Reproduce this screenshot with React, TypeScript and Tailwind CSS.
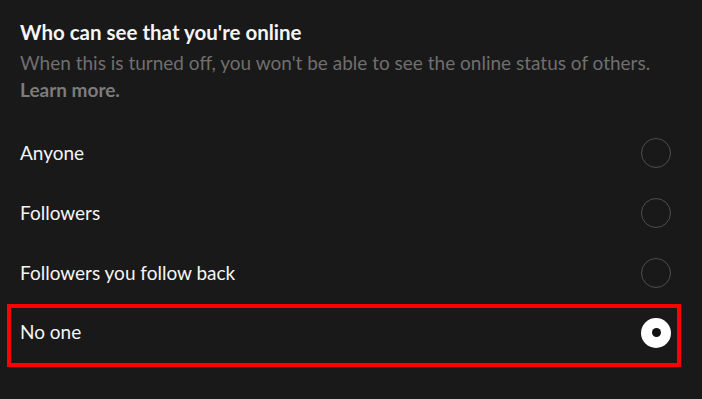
import React, { useState } from 'react';

const options = ['Anyone', 'Followers', 'Followers you follow back', 'No one'];

export default function App() {
  const [selected, setSelected] = useState('No one');

  return (
    <div
      className="w-[702px] h-[399px] bg-[#191919] text-[#f5f5f5] overflow-hidden pl-5 pr-[31px] pt-5"
      style={{ fontFamily: 'Lato, "Noto Sans", sans-serif' }}
    >
      <h2 className="text-[20.5px] leading-6 font-bold">Who can see that you're online</h2>
      <p className="mt-[5px] text-[19px] leading-[27px] text-[#6f6f6f]">
        When this is turned off, you won't be able to see the online status of others.
        <br />
        <span className="font-bold text-[#7c7c7c]">Learn more.</span>
      </p>
      <div className="mt-[20px] flex flex-col">
        {options.map(opt => {
          const isActive = selected === opt;
          return (
            <button
              key={opt}
              onClick={() => setSelected(opt)}
              className={`flex items-center justify-between text-left ${
                isActive
                  ? 'h-[63px] mt-[1px] -ml-[13px] -mr-[10px] pl-[9px] pr-[6px] pb-[6px] border-4 border-[#ff0000]'
                  : 'h-[60px]'
              }`}
            >
              <span className="text-[19px]">{opt}</span>
              {isActive ? (
                <span className="w-[30px] h-[30px] rounded-full bg-white flex items-center justify-center">
                  <span className="w-[9px] h-[9px] rounded-full bg-[#111]" />
                </span>
              ) : (
                <span className="w-[30px] h-[30px] rounded-full border-[1.5px] border-[#4f4f4f]" />
              )}
            </button>
          );
        })}
      </div>
    </div>
  );
}
